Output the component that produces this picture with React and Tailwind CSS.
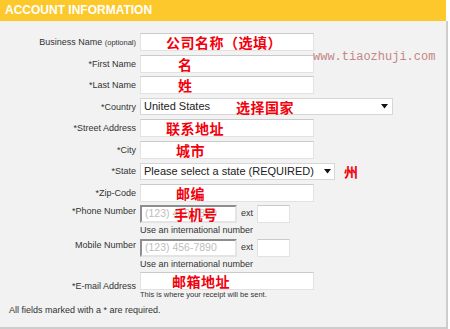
import React from 'react'

// Account information form (annotated screenshot)

const red = "text-[#f2000c] font-bold text-[14px] tracking-[0.5px] leading-none font-['Noto_Sans_CJK_SC','Noto_Sans_CJK_JP',sans-serif]"

function Label({ children }) {
  return (
    <div className="w-[136px] shrink-0 text-right text-[9px] leading-[12px] text-[#333]">
      {children}
    </div>
  )
}

function Row({ label, children }) {
  return (
    <div className="flex items-center h-[18px]">
      <Label>{label}</Label>
      <div className="ml-[4px] flex items-center h-[18px]">{children}</div>
    </div>
  )
}

function TextBox({ width, pad, text }) {
  return (
    <div
      className={`${width} ${pad} h-[18px] bg-white border border-[#e2e2e2] border-t-[#cacaca] flex items-center`}
    >
      {text && <span className={red}>{text}</span>}
    </div>
  )
}

function Arrow() {
  return (
    <svg width="7" height="5" viewBox="0 0 7 5" className="shrink-0">
      <path d="M0 0 H7 L3.5 4.5 Z" fill="#111" />
    </svg>
  )
}

function PhoneBox() {
  return (
    <div className="relative w-[97px] h-[18px] bg-white border-2 border-[#e4e4e4] border-t-[#8e8e8e] border-l-[#8e8e8e] pl-[3px] flex items-center">
      <span className="text-[10.5px] text-[#bdbdbd]">(123) 456-7890</span>
    </div>
  )
}

function ExtBox() {
  return (
    <>
      <span className="ml-[4px] text-[9px] text-[#333]">ext</span>
      <div className="ml-[4px] w-[33px] h-[18px] bg-white border border-[#e2e2e2] border-t-[#cacaca]" />
    </>
  )
}

export default function App() {
  return (
    <div className="w-[450px] h-[329px] bg-white font-['Liberation_Sans',Arial,sans-serif]">
      {/* Header */}
      <div className="w-[446px] h-[21px] bg-[#fdc82b] pl-[5px] text-white font-bold text-[12px] leading-[21px]">
        ACCOUNT INFORMATION
      </div>

      {/* Panel */}
      <div className="relative w-[448px] h-[308px] bg-[#f2f2f2] border-r-2 border-b-2 border-[#cdcdcd] pt-[12px]">
        <div className="flex flex-col gap-[3.5px]">
          <Row label={<>Business Name <span className="text-[7.5px]">(optional)</span></>}>
            <TextBox width="w-[174px]" pad="pl-[25px]" text="公司名称（选填）" />
          </Row>
          <Row label="*First Name">
            <TextBox width="w-[174px]" pad="pl-[37px]" text="名" />
          </Row>
          <Row label="*Last Name">
            <TextBox width="w-[174px]" pad="pl-[37px]" text="姓" />
          </Row>
          <Row label="*Country">
            <div className="w-[253px] h-[17px] bg-white border border-[#d6d6d6] pl-[3px] pr-[4px] flex items-center">
              <span className="w-[92px] text-[11px] text-[#222]">United States</span>
              <span className={red}>选择国家</span>
              <span className="flex-1" />
              <Arrow />
            </div>
          </Row>
          <Row label="*Street Address">
            <TextBox width="w-[174px]" pad="pl-[25px]" text="联系地址" />
          </Row>
          <Row label="*City">
            <TextBox width="w-[174px]" pad="pl-[35px]" text="城市" />
          </Row>
          <Row label="*State">
            <div className="w-[195px] h-[17px] bg-white border border-[#d6d6d6] pl-[3px] pr-[3px] flex items-center">
              <span className="text-[11px] text-[#222]">Please select a state (REQUIRED)</span>
              <span className="flex-1" />
              <Arrow />
            </div>
            <span className={`ml-[9px] ${red}`}>州</span>
          </Row>
          <Row label="*Zip-Code">
            <TextBox width="w-[174px]" pad="pl-[35px]" text="邮编" />
          </Row>
        </div>

        {/* Phone */}
        <div className="flex items-start mt-[3.5px]">
          <Label>*Phone Number</Label>
          <div className="ml-[4px] flex flex-col">
            <div className="flex items-center">
              <div className="relative">
                <PhoneBox />
                <span className={`absolute left-[34px] top-[2px] ${red}`}>手机号</span>
              </div>
              <ExtBox />
            </div>
            <div className="mt-[1px] text-[9px] leading-[12px] text-[#333]">Use an international number</div>
          </div>
        </div>

        {/* Mobile */}
        <div className="flex items-start mt-[3px]">
          <Label>Mobile Number</Label>
          <div className="ml-[4px] flex flex-col">
            <div className="flex items-center">
              <PhoneBox />
              <ExtBox />
            </div>
            <div className="mt-[1px] text-[9px] leading-[12px] text-[#333]">Use an international number</div>
          </div>
        </div>

        {/* E-mail */}
        <div className="flex items-center mt-[2px]">
          <Label>*E-mail Address</Label>
          <div className="ml-[4px] flex flex-col">
            <TextBox width="w-[174px]" pad="pl-[31px]" text="邮箱地址" />
            <div className="text-[7.5px] leading-[10px] text-[#333]">This is where your receipt will be sent.</div>
          </div>
        </div>

        <div className="mt-[4px] pl-[9px] text-[9px] leading-[12px] text-[#333]">
          All fields marked with a * are required.
        </div>

        {/* Watermark */}
        <div className="absolute left-[313px] top-[29px] text-[12px] leading-[14px] text-[#c68585] font-['Liberation_Mono','Courier_New',monospace]">
          www.tiaozhuji.com
        </div>
      </div>
    </div>
  )
}
